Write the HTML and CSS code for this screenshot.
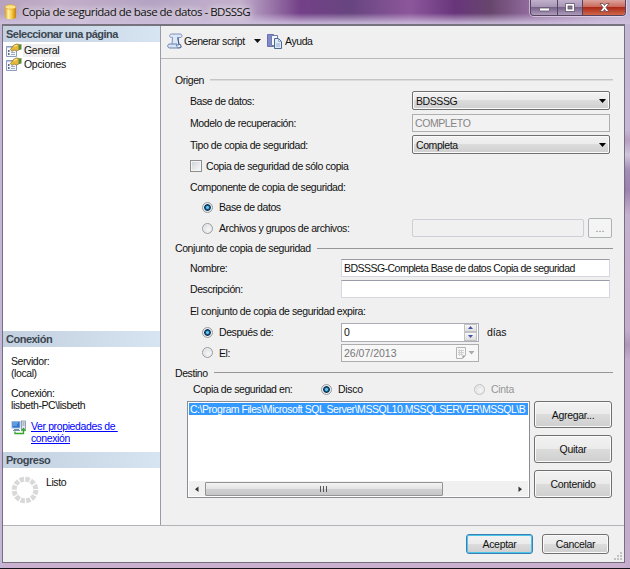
FILE: index.html
```html
<!DOCTYPE html>
<html lang="es">
<head>
<meta charset="utf-8">
<title>Copia de seguridad de base de datos - BDSSSG</title>
<link rel="stylesheet" href="styles.css">
</head>
<body>
<div class="window">
  <header class="titlebar">
    <svg class="db-icon" width="13" height="16" viewBox="0 0 13 16">
      <defs><linearGradient id="gold" x1="0" x2="1"><stop offset="0" stop-color="#e09a18"/><stop offset=".3" stop-color="#fff2a8"/><stop offset=".6" stop-color="#f7cd48"/><stop offset="1" stop-color="#c87d0a"/></linearGradient></defs>
      <path d="M1 3v10c0 3 11 3 11 0V3z" fill="url(#gold)"/>
      <ellipse cx="6.5" cy="3" rx="5.5" ry="2.2" fill="#fbe48a" stroke="#dfa52b" stroke-width=".7"/>
    </svg>
    <h1>Copia de seguridad de base de datos - BDSSSG</h1>
    <div class="caption-buttons">
      <span class="cap min"><svg width="26" height="15" viewBox="0 0 26 15"><rect x="8.5" y="8" width="10" height="3" rx=".5" fill="#fff" stroke="#5d5266" stroke-width=".8"/></svg></span>
      <span class="cap max"><svg width="24" height="15" viewBox="0 0 24 15"><path d="M7.500 3.500h9v8h-9z" fill="#fff" stroke="#5d5266" stroke-width=".8"/><rect x="10" y="6" width="4" height="3" fill="#8b7898" stroke="#5d5266" stroke-width=".8"/></svg></span>
      <span class="cap close"><svg width="42" height="15" viewBox="0 0 42 15"><path d="M17 3.500h3l1.500 2 1.500-2h3l-3 4 3 4h-3l-1.500-2-1.500 2h-3l3-4z" fill="#fff" stroke="#66464b" stroke-width=".8"/></svg></span>
    </div>
  </header>

  <div class="client">
    <div class="body">
      <aside class="sidebar">
        <h2>Seleccionar una página</h2>
        <nav class="pages">
          <a class="page selected"><svg width="16" height="14"><use href="#props"/></svg><span>General</span></a>
          <a class="page"><svg width="16" height="14"><use href="#props"/></svg><span>Opciones</span></a>
        </nav>
        <h2>Conexión</h2>
        <section class="connection">
          <p>Servidor:<br>(local)</p>
          <p>Conexión:<br>lisbeth-PC\lisbeth</p>
          <div class="link-row">
            <svg width="16" height="16" viewBox="0 0 16 16">
              <rect x="1" y="1.500" width="8" height="6.500" fill="#2f74d0" stroke="#9db8d4"/><path d="M2 3h5M2 5h4" stroke="#8cc5f5"/>
              <path d="M2 10.500h7M3 9.500h5" stroke="#7790aa"/>
              <rect x="10.500" y="1" width="4" height="8.500" fill="#e2e8f0" stroke="#7e8ea3" stroke-width=".8"/><path d="M11.500 3h2M11.500 5h2" stroke="#5f7085" stroke-width=".8"/>
              <path d="M4 11.500v2h8.500V9M10.500 11l2-2.500 2 2.500" fill="none" stroke="#37a32d" stroke-width="1.300"/>
            </svg>
            <a class="link">Ver propiedades de&nbsp;<br>conexión</a>
          </div>
        </section>
        <h2>Progreso</h2>
        <section class="progress">
          <svg width="28" height="28" viewBox="0 0 28 28"><circle cx="14" cy="14" r="10.800" fill="none" stroke="#d9d9d9" stroke-width="5" stroke-dasharray="4.350 1.305"/></svg>
          <span>Listo</span>
        </section>
      </aside>

      <main class="main">
        <div class="toolbar">
          <svg width="16" height="16" viewBox="0 0 16 16"><path d="M4.500 1H13c2.700 0 2.600 3.500 0 3.500h-2L12 12H5L5.500 4.500h-1C2 4.500 2 1 4.500 1z" fill="#dce8f8" stroke="#7189b8" stroke-width=".9"/><path d="M2 11h8c-1 1.500 0 4 2 4H3C.3 15 0 12 2 11z" fill="#d6e3f6" stroke="#5d76a8" stroke-width=".9"/><path d="M10.800 4.500L11.800 11c3 .5 3 4 .2 4" fill="none" stroke="#42598b" stroke-width="1.100"/></svg>
          <span class="tool-text script">Generar script</span>
          <svg class="tool-arrow" width="7" height="4"><path d="M0 0h7L3.500 4z" fill="#111"/></svg>
          <svg width="15" height="16" viewBox="0 0 15 16"><path d="M.5 1.500h6v12h-6z" fill="#8187c8" stroke="#6a70ad"/><path d="M4.500 2.500h6v10h-6z" fill="#f6f9fd" stroke="#6c7fa5"/><path d="M7.500 5.500h4l3 3v7h-7z" fill="#dce9f7" stroke="#4c6892"/><path d="M11.500 5.500v3h3M9 11h4M9 13h4" fill="none" stroke="#84a0c4" stroke-width=".8"/></svg>
          <span class="tool-text help">Ayuda</span>
        </div>

        <form class="form">
          <div class="group"><span>Origen</span><i></i></div>
          <div class="row"><label class="label">Base de datos:</label><div class="combo"><span>BDSSSG</span><svg width="7" height="4"><path d="M0 0h7L3.500 4z"/></svg></div></div>
          <div class="row"><label class="label">Modelo de recuperación:</label><div class="text readonly">COMPLETO</div></div>
          <div class="row"><label class="label">Tipo de copia de seguridad:</label><div class="combo"><span>Completa</span><svg width="7" height="4"><path d="M0 0h7L3.500 4z"/></svg></div></div>
          <div class="row"><span class="check"></span><label>Copia de seguridad de sólo copia</label></div>
          <div class="row"><label>Componente de copia de seguridad:</label></div>
          <div class="row indent"><span class="radio on"></span><label>Base de datos</label></div>
          <div class="row indent"><span class="radio"></span><label class="files">Archivos y grupos de archivos:</label><div class="text disabled"></div><span class="browse">...</span></div>
          <div class="group dark"><span>Conjunto de copia de seguridad</span><i></i></div>
          <div class="row"><label class="label short">Nombre:</label><div class="text long">BDSSSG-Completa Base de datos Copia de seguridad</div></div>
          <div class="row"><label class="label short">Descripción:</label><div class="text long"></div></div>
          <div class="row"><label>El conjunto de copia de seguridad expira:</label></div>
          <div class="row indent"><span class="radio on"></span><label class="expiry">Después de:</label>
            <div class="text spinner"><span>0</span><div class="spin"><b><svg width="5" height="3"><path d="M0 3h5L2.500 0z"/></svg></b><b><svg width="5" height="3"><path d="M0 0h5L2.500 3z"/></svg></b></div></div>
            <span class="days">días</span></div>
          <div class="row indent"><span class="radio"></span><label class="expiry">El:</label>
            <div class="text date"><span>26/07/2013</span><svg width="20" height="12" viewBox="0 0 20 12"><path d="M.5.500h9v8l-3 3h-6z" fill="#f7f7f7" stroke="#b5b5b5"/><path d="M2 3.500h6M2 5.500h6M2 7.500h5M3.500 2.500v6M5.500 2.500v6" stroke="#d0d0d0"/><path d="M9.500 8.500h-3v3z" fill="#999"/><path d="M12.500 4h6l-3 3.500z" fill="#aaa"/></svg></div></div>
          <div class="group dark"><span>Destino</span><i></i></div>
          <div class="row target"><label class="to">Copia de seguridad en:</label><span class="radio on"></span><label class="disk">Disco</label><span class="radio off"></span><label class="tape">Cinta</label></div>
          <div class="destination">
            <div class="list">
              <div class="item">C:\Program Files\Microsoft SQL Server\MSSQL10.MSSQLSERVER\MSSQL\B</div>
              <div class="scroll">
                <svg width="18" height="14"><path d="M9.500 4.500v5.500L6 7.250z" fill="#333"/></svg>
                <div class="thumb"><svg width="8" height="6"><path d="M.5 0v6M3.500 0v6M6.500 0v6" stroke="#555"/></svg></div>
                <svg class="right" width="16" height="14"><path d="M6.500 4.500v5.500L10 7.250z" fill="#333"/></svg>
              </div>
            </div>
            <div class="actions"><button type="button">Agregar...</button><button type="button">Quitar</button><button type="button">Contenido</button></div>
          </div>
        </form>
      </main>
    </div>
    <footer class="footer">
      <button type="button" class="default">Aceptar</button><button type="button">Cancelar</button>
      <svg class="grip" width="9" height="9"><path d="M6 0h2v2H6zM3 3h2v2H3zM6 3h2v2H6zM0 6h2v2H0zM3 6h2v2H3zM6 6h2v2H6z" fill="#c2c2c2"/></svg>
    </footer>
  </div>
</div>
<svg width="0" height="0" class="defs">
  <symbol id="props" viewBox="0 0 16 14">
    <path d="M.5 3.500h10v10H.5z" fill="#f4f7fc" stroke="#8c9cbd"/><path d="M1 4.500h6" stroke="#b8cbe8"/>
    <path d="M2 8h1.500M2 11h1.500" stroke="#2b3d66" stroke-width="1.500"/><path d="M5 9.500h4M5 11.500h4" stroke="#9eabc2"/>
    <path d="M4.500 6.500l3-4.200L10.500 1l3 .5v5l-3 1.500-2.500-1L6 8.500z" fill="#e8b838" stroke="#8a7030" stroke-width=".7"/>
    <path d="M12.500 2l3-1v5.500l-3 .5z" fill="#5b8b3a"/><path d="M8 3.300l3-1" stroke="#fff3a0"/>
  </symbol>
</svg>
</body>
</html>
```
FILE: styles.css
```css
* { box-sizing: border-box; }
body { margin: 0; width: 630px; height: 569px; overflow: hidden; font: 10.5px/12px "Liberation Sans", Arial, sans-serif; letter-spacing: -0.42px; color: #111; }
svg { flex: none; display: block; }
.defs { position: absolute; }
h1, h2, p { margin: 0; }
.window { width: 630px; height: 569px; display: flex; flex-direction: column; border-bottom: 1px solid #17131c; padding: 0 5px 5px 2px;
  background: linear-gradient(90deg, #c4b6d6 0 3px, transparent 3px 625px, rgba(185,166,203,.35) 626px), linear-gradient(#c9bddb, #cdbddc 130px, #b698be 140px, #ddd3e6 155px, #9a80ae 170px, #8d6fa0 190px, #cdb5d2 215px, #c9add0 330px, #a98fb2 345px, #c9add0 360px, #c9add0 480px, #cbb1d0); }
.titlebar { height: 24px; margin: 0 -5px 0 -2px; padding-left: 4px; display: flex; flex: none; align-items: flex-start;
  background: linear-gradient(rgba(210,195,225,0) 55%, rgba(207,193,222,.85) 95%), linear-gradient(90deg, #b6a2bd, #c3aec9 60px, #b5a3c4 150px, #c2b0cc 240px, #744088 300px, #67457f 350px, #8d579b 410px, #68357b 455px, #67466d 490px, #916b9d 530px, #bca8cb 600px, #c2b4d1); }
.db-icon { margin-top: 4px; }
h1 { font: 11.5px/16px "Open Sans", "Noto Sans", sans-serif; letter-spacing: -0.5px; margin: 4px 0 0 5px; white-space: nowrap; text-shadow: 0 0 6px #eee, 0 0 8px #eee; }
.caption-buttons { display: flex; margin: 0 4px 0 auto; border: 1px solid #54445e; border-top: 0; border-radius: 0 0 4px 4px; overflow: hidden; box-shadow: 0 0 0 1px rgba(240,230,245,.6); }
.cap { display: block; height: 15px; background: linear-gradient(#c1b1cc, #a795b6 45%, #796489 50%, #ad9bbd); border-right: 1px solid #54445e; }
.cap.close { background: linear-gradient(#dba39c, #cb6b5c 45%, #ac2a18 50%, #d0674a); border: 0; }
.client { flex: 1; min-height: 0; display: flex; flex-direction: column; border: 1px solid #74717f; border-top: 2px solid #77737e; background: #f0f0f0; }
.body { height: 500px; display: flex; border-bottom: 1px solid #b3b3b9; }
.sidebar { flex: none; width: 158px; background: #fff; border-right: 1px solid #9b9ba8; display: flex; flex-direction: column; }
h2 { flex: none; height: 16px; padding-left: 3px; font: bold 11px/16px "Liberation Sans", Arial, sans-serif; letter-spacing: -0.5px; color: #3c4651; background: linear-gradient(90deg, #c2d0df, #d7e4f2); }
.pages { height: 289px; padding: 1px 0 0 3px; }
.page { display: flex; align-items: center; height: 14px; gap: 1px; }
.page span { padding: 0 1px; line-height: 13px; letter-spacing: -0.3px; }
.page.selected span { background: #f0f0f0; }
.connection { height: 105px; padding: 8px 0 0 8px; }
.connection p { margin-bottom: 8px; }
.link-row { display: flex; gap: 4px; margin-top: 9px; }
.link { color: #00f; text-decoration: underline; letter-spacing: -.38px; }
.progress { display: flex; padding: 8px 0 0 8px; gap: 7px; }
.main { flex: 1; min-width: 0; }
.toolbar { height: 33px; border-bottom: 1px solid #b8b8bd; display: flex; align-items: center; padding: 0 0 3px 6px; }
.tool-text { margin-left: 1px; }
.script { width: 70px; letter-spacing: -0.42px; }
.tool-arrow { margin-right: 6px; }
.help { margin-left: 3px; letter-spacing: -0.42px; }
.form { display: grid; padding: 10px 11px 0 14px; grid-template-rows: 21px 21px 23px 21px 22px 20px 20px 22px 18px 21px 22px 22px 20px 21px 19px 19px 97px; }
.group { display: flex; align-items: center; gap: 6px; }
.group i { flex: 1; height: 2px; background: #c5c5c5; border-bottom: 1px solid #ddd; }
.group.dark i { height: 1px; background: #969696; border: 0; }
.row { display: flex; align-items: center; padding-left: 15px; white-space: nowrap; }
.indent { padding-left: 27px; }
.label { width: 222px; }
.label.short { width: 151px; }
.combo { width: 198px; height: 19px; padding: 0 3px; border: 1px solid #707070; border-radius: 2px; box-shadow: inset 0 0 0 1px #fafafa; background: linear-gradient(#f2f2f2, #ebebeb 48%, #dcdcdc 50%, #cfcfcf); display: flex; align-items: center; justify-content: space-between; }
.text { width: 198px; height: 18px; padding: 0 2px; background: #fff; border: 1px solid #d5d8e2; border-top-color: #999ca6; line-height: 16px; overflow: hidden; }
.text.long { width: 269px; letter-spacing: -.53px; }
.text.readonly { background: #f2f2f2; color: #858585; border-color: #afafaf; }
.text.disabled { width: 172px; background: #f0f0f0; border-color: #cdced6; border-radius: 2px; margin-right: 4px; }
.browse { width: 24px; height: 20px; border: 1px solid #adb2b5; border-radius: 2px; background: #f4f4f4; text-align: center; color: #838383; line-height: 18px; letter-spacing: 0; }
.check { width: 12px; height: 12px; border: 1px solid #8e8f8f; background: linear-gradient(135deg, #cdd1d5, #fbfbfb); box-shadow: inset 0 0 0 1px #f4f4f4; margin-right: 4px; }
.radio { flex: none; width: 11px; height: 11px; border: 1px solid #999ca1; border-radius: 50%; background: radial-gradient(circle at 60% 60%, #f7f7f7, #d1d5d9); box-shadow: inset 0 0 0 1px #eee; margin-right: 6px; }
.radio.on { background: radial-gradient(circle, #62c7ec 0 1px, #135484 2px, #0d304f 3px, #e1e5ea 4px); }
.radio.off { border-color: #c2c2c2; }
.files { width: 193px; }
.expiry { width: 122px; }
.spinner { width: 138px; height: 19px; display: flex; padding-right: 0; border-color: #aaadb5; }
.spin { margin-left: auto; width: 13px; display: grid; grid-template-rows: 1fr 1fr; margin-right: 1px; }
.spin b { border: 1px solid #c2c2c5; background: linear-gradient(#f8f8f8, #ddd); display: grid; place-items: center; }
.spin path { fill: #4353a5; }
.days { margin-left: 8px; letter-spacing: -.1px; }
.date { width: 138px; display: flex; justify-content: space-between; align-items: center; color: #777; border-color: #adadad; background: #f7f7f7; letter-spacing: 0; }
.target { padding: 0 0 5px 18px; }
.to { width: 128px; }
.disk { width: 136px; letter-spacing: -.3px; }
.tape { color: #969696; letter-spacing: -.3px; }
.destination { display: flex; margin: 0 0 0 12px; gap: 4px; }
.list { width: 343px; height: 97px; padding: 1px; border: 1px solid #8a8d96; background: #fff; display: flex; flex-direction: column; justify-content: space-between; }
.item { height: 12px; line-height: 12px; padding-left: 1px; overflow: hidden; white-space: nowrap; background: #3399ff; color: #fff; letter-spacing: -.46px; }
.scroll { display: flex; height: 15px; background: #f0f0f0; align-items: center; }
.thumb { width: 238px; height: 14px; margin-left: -2px; border: 1px solid #949494; border-radius: 1px; background: linear-gradient(#f2f2f2, #e4e4e6 48%, #d0d0d2 50%, #c6c6c9); display: grid; place-items: center; }
.right { margin-left: auto; }
.actions { display: grid; grid-template-rows: 27px 28px 28px; gap: 7px; width: 78px; }
button { font: inherit; letter-spacing: -0.3px; color: #111; padding: 0; border: 1px solid #707070; border-radius: 3px; box-shadow: inset 0 0 0 1px #fafafa; background: linear-gradient(#f2f2f2, #ebebeb 48%, #dcdcdc 50%, #cfcfcf); }
.footer { flex: 1; position: relative; display: flex; justify-content: flex-end; gap: 9px; padding: 8px 15px 0 0; }
.footer button { width: 67px; height: 20px; }
.footer .default { border-color: #3c7fb1; box-shadow: inset 0 0 0 1px #49c5ee; }
.grip { position: absolute; right: 1px; bottom: 1px; }
```
